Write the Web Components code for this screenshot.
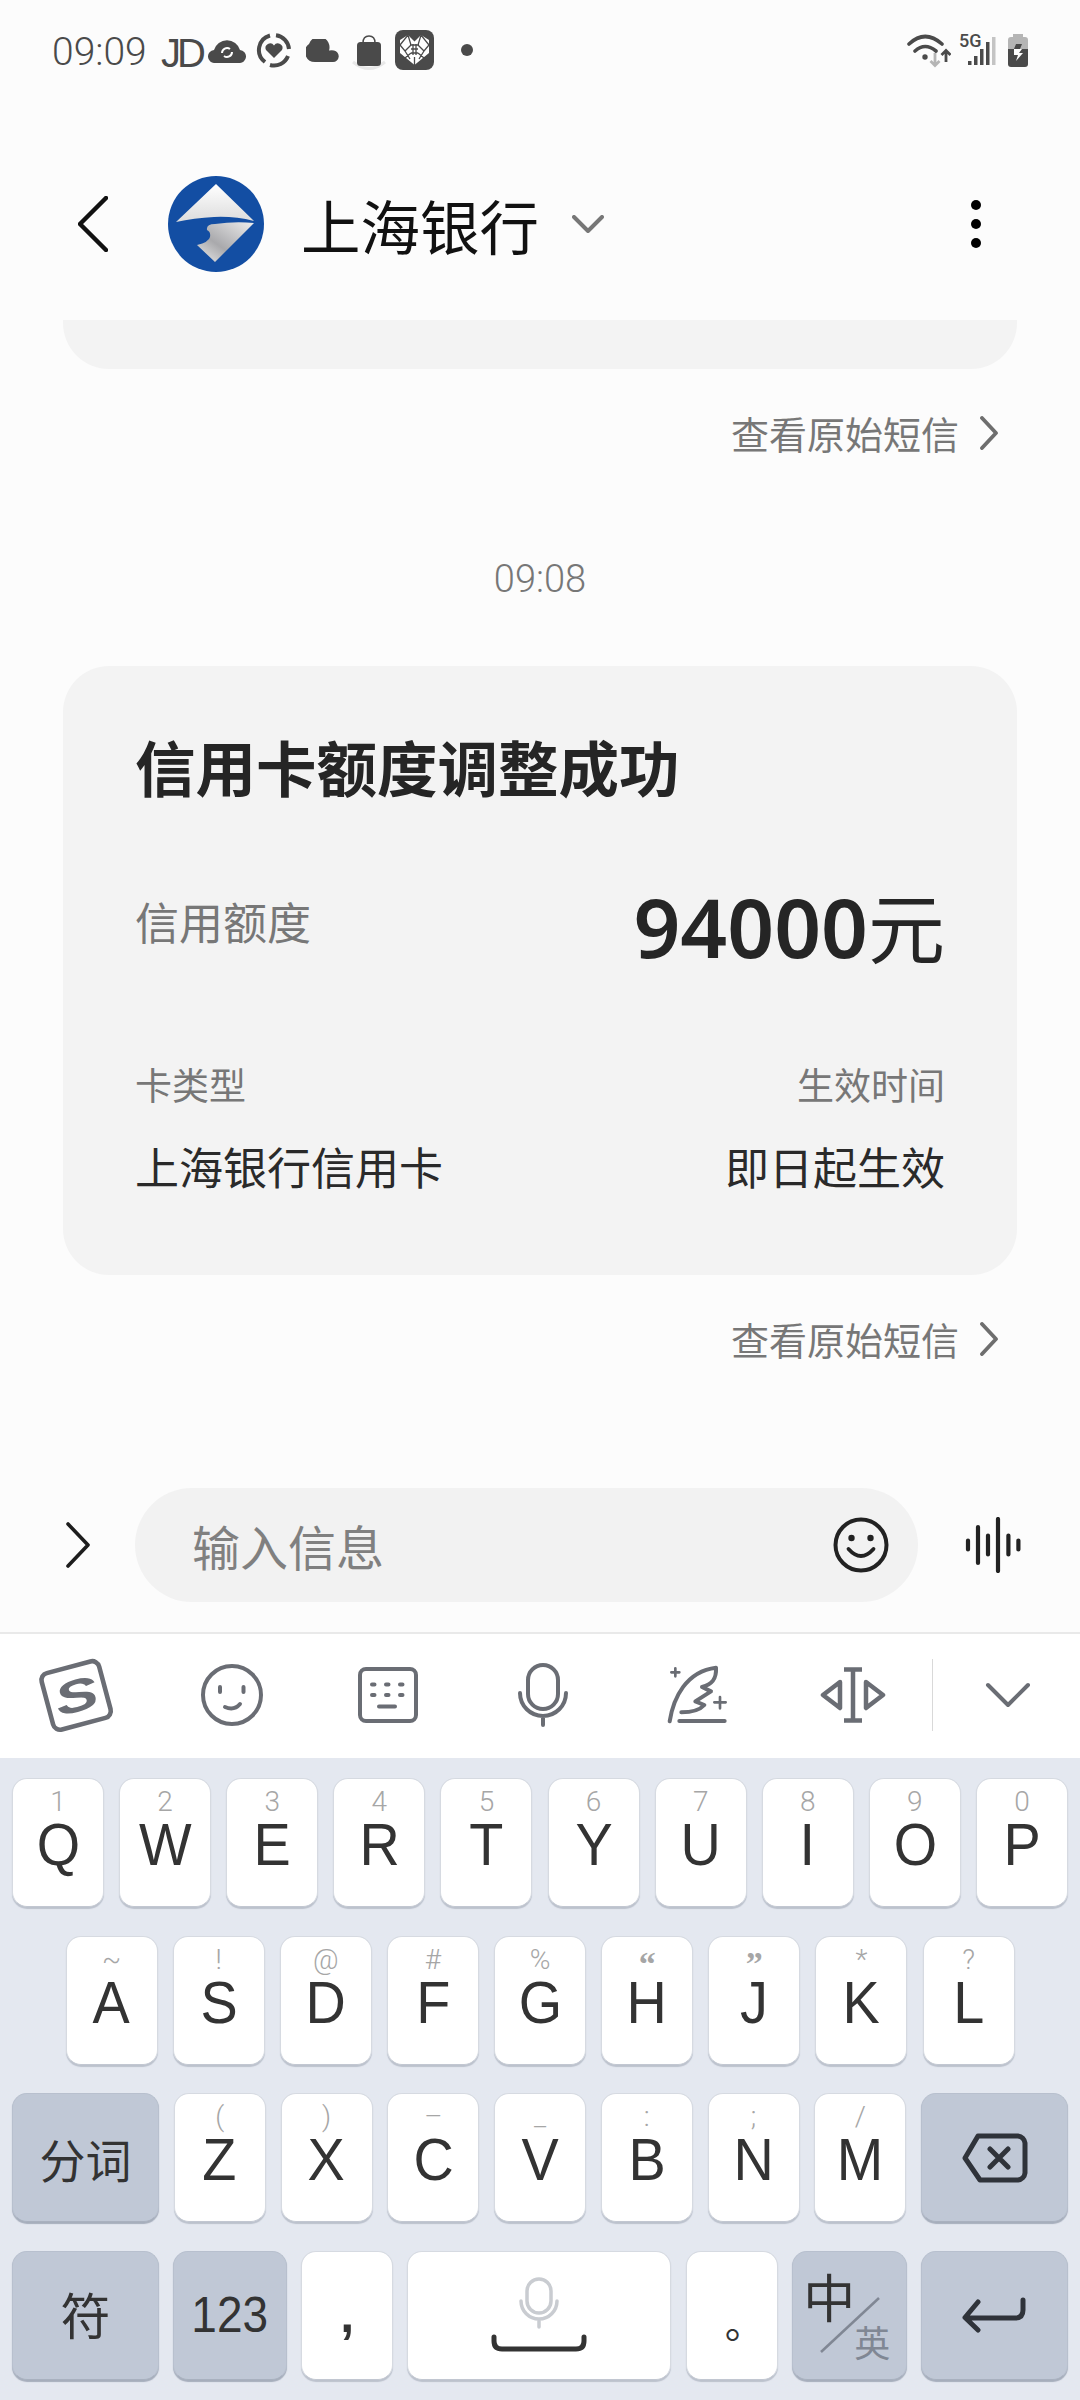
<!DOCTYPE html>
<html lang="zh">
<head>
<meta charset="utf-8">
<title>上海银行</title>
<style>
    html, body { margin: 0; padding: 0; }
    body {
        width: 1080px;
        height: 2400px;
        overflow: hidden;
        background: #fcfcfc;
        display: flex;
        flex-direction: column;
        font-family: "Noto Sans CJK SC", "Noto Sans", sans-serif;
    }
</style>
</head>
<body>
<status-bar></status-bar>
<app-header>上海银行</app-header>
<message-list>
    <bubble-stub></bubble-stub>
    <source-link>查看原始短信</source-link>
    <time-label>09:08</time-label>
    <limit-card>
        <span slot="title">信用卡额度调整成功</span>
        <span slot="label">信用额度</span>
        <span slot="digits">94000</span>
        <span slot="unit">元</span>
        <span slot="type-label">卡类型</span>
        <span slot="type-value">上海银行信用卡</span>
        <span slot="time-label">生效时间</span>
        <span slot="time-value">即日起生效</span>
    </limit-card>
    <source-link>查看原始短信</source-link>
</message-list>
<compose-bar>输入信息</compose-bar>
<ime-toolbar></ime-toolbar>
<ime-keyboard></ime-keyboard>

<script>
const INK = "#4a4a4a";

class StatusBar extends HTMLElement {
    constructor() {
        super();
        this.shadowDOM = this.attachShadow({ mode: "open" });
    }

    connectedCallback() {
        this.render();
    }

    render() {
        this.shadowDOM.innerHTML = `
        <style>
        :host { display: flex; height: 104px; box-sizing: border-box; padding: 31px 0 0 52px; color: ${INK}; }
        .time { font: 300 39px/40px Roboto, sans-serif; margin-top: 1px; width: 109px; }
        .jd { font: 400 40px/40px "Liberation Sans", sans-serif; letter-spacing: -4px; width: 47px; margin-top: 2px; }
        svg { display: block; flex: none; }
        .five { font: 500 18px/18px Roboto, sans-serif; }
        </style>
        <div class="time">09:09</div>
        <div class="jd">JD</div>
        <svg width="38" height="25" viewBox="0 0 38 25" style="margin-top:7px">
            <path fill="${INK}" d="M7 25h24a6.5 6.5 0 0 0 1-13A13.5 13.5 0 0 0 6 12a6.5 6.5 0 0 0 1 13z"/>
            <path fill="none" stroke="#fff" stroke-width="2" d="M14 15a5 5 0 0 1 8-4M24 14a5 5 0 0 1-8 4"/>
        </svg>
        <svg width="36" height="36" viewBox="0 0 36 36" style="margin:1px 0 0 10px">
            <path fill="none" stroke="${INK}" stroke-width="4" d="M14 3.5A15 15 0 0 0 9 30M14 33A15 15 0 0 0 32 24M33 17A15 15 0 0 0 20 3.2"/>
            <path fill="${INK}" d="M18 26l-8-8a4.6 4.6 0 0 1 8-4.500a4.600 4.600 0 0 1 8 4.500z"/>
        </svg>
        <svg width="33" height="23" viewBox="0 0 33 23" style="margin:8px 0 0 14px">
            <path fill="${INK}" d="M9 23h18a5.800 5.800 0 0 0 1-11.500q-2-.5-5 0A10.500 10.500 0 0 0 3 5a10 10 0 0 0 6 18z"/>
        </svg>
        <svg width="36" height="38" viewBox="0 0 36 38" style="margin:3px 0 0 12px">
            <path fill="none" stroke="#e8e8e8" stroke-width="3" d="M2 28q16 13 32 0"/>
            <path fill="none" stroke="${INK}" stroke-width="1.500" d="M12 9q0-7 6-7t6 7"/>
            <rect x="6" y="8" width="24" height="24" rx="3.500" fill="${INK}"/>
        </svg>
        <svg width="39" height="40" viewBox="0 0 39 40" style="margin:-1px 0 0 8px">
            <rect width="39" height="40" rx="8" fill="${INK}"/>
            <path fill="#fff" d="M19.500 11.500L26 5l8 5v13L19.500 35 5 23V10l8-5z"/>
            <path fill="none" stroke="${INK}" stroke-width="1.300" d="M5 15l8-10 3 10-6 6zM34 15L26 5l-3 10 6 6zM15 15h9M16 19h7M16 23h7M18 14v11M21 14v11M10 21l5 8M29 21l-5 8M10 28l6-5M29 28l-6-5M19.500 27v8"/>
        </svg>
        <svg width="12" height="12" viewBox="0 0 12 12" style="margin:13px 0 0 27px"><circle cx="6" cy="6" r="6" fill="${INK}"/></svg>
        <svg width="44" height="36" viewBox="0 0 44 36" style="margin:1px 0 0 434px">
            <path fill="none" stroke="${INK}" stroke-width="3.600" stroke-linecap="round" d="M2 12Q18-3 35 12M8 19q10-9 21 0M14 24.500"/>
            <circle cx="18" cy="25" r="2.700" fill="${INK}"/>
            <path fill="none" stroke="#b5b5b5" stroke-width="2.800" d="M28 21v12M23.500 29l4.500 4.500 4.500-4.500"/>
            <path fill="none" stroke="${INK}" stroke-width="2.800" d="M39 30V19M34.500 23l4.500-4.500 4.500 4.500"/>
        </svg>
        <div style="width:40px;height:36px;margin:0 0 0 8px;display:flex;flex-direction:column">
            <span class="five" style="height:0;margin-top:1px">5G</span>
            <svg width="40" height="35" viewBox="0 0 40 35" style="margin-top:0">
                <rect x="9" y="29" width="3.500" height="4" fill="${INK}"/>
                <rect x="15" y="24" width="3.500" height="9" fill="${INK}"/>
                <rect x="21" y="17" width="3.500" height="16" fill="${INK}"/>
                <rect x="27" y="10" width="3.500" height="23" fill="${INK}"/>
                <rect x="33" y="5" width="3.500" height="28" fill="#c4c4c4"/>
            </svg>
        </div>
        <svg width="22" height="33" viewBox="0 0 22 33" style="margin:3px 0 0 8px">
            <path fill="#b5b5b5" d="M6 0h10v3h2a3 3 0 0 1 3 3v9H1V6a3 3 0 0 1 3-3h2z"/>
            <path fill="${INK}" d="M1 15h20v15a3 3 0 0 1-3 3H4a3 3 0 0 1-3-3z"/>
            <path fill="${INK}" d="M9 10h6l-2 5H7z"/>
            <path fill="#fff" d="M7 15h8l-3 4h4l-7 8 2-6H7z"/>
        </svg>
        `;
    }
}

class AppHeader extends HTMLElement {
    constructor() {
        super();
        this.shadowDOM = this.attachShadow({ mode: "open" });
    }

    connectedCallback() {
        this.render();
    }

    render() {
        this.shadowDOM.innerHTML = `
        <style>
        :host { display: flex; align-items: center; height: 216px; box-sizing: border-box; padding: 72px 0 48px 78px; color: #111; }
        svg { display: block; flex: none; }
        .name { font-size: 59.500px; line-height: 96px; font-weight: 400; margin-left: 37px; width: 271px; white-space: nowrap; }
        </style>
        <svg width="30" height="56" viewBox="0 0 30 56"><path fill="none" stroke="#111" stroke-width="4.500" stroke-linecap="round" stroke-linejoin="round" d="M28 2L2 28l26 26"/></svg>
        <svg width="96" height="96" viewBox="168 176 96 96" style="margin-left:60px">
            <defs>
                <linearGradient id="a" x1="0" y1="0" x2="0" y2="1"><stop offset="0" stop-color="#fff"/><stop offset="1" stop-color="#dcdcdc"/></linearGradient>
                <linearGradient id="b" x1="1" y1="0" x2="0" y2="1"><stop offset="0" stop-color="#eee"/><stop offset=".6" stop-color="#a9a9ac"/><stop offset="1" stop-color="#ececec"/></linearGradient>
            </defs>
            <circle cx="216" cy="224" r="48" fill="#134ea3"/>
            <path fill="url(#a)" d="M216 184l38 37q-20-5-40-4t-38 5z"/>
            <path fill="url(#b)" d="M254 223l-39 39-18-17q12-3 13-8t-3-7q-1-6 8-6 20-3 39-1z"/>
        </svg>
        <div class="name"><slot></slot></div>
        <svg width="32" height="18" viewBox="0 0 32 18"><path fill="none" stroke="#777" stroke-width="4" stroke-linecap="round" stroke-linejoin="round" d="M2 2l14 14L30 2"/></svg>
        <svg width="10" height="48" viewBox="0 0 10 48" style="margin-left:367px"><circle cx="5" cy="5" r="5"/><circle cx="5" cy="24" r="5"/><circle cx="5" cy="43" r="5"/></svg>
        `;
    }
}

class MessageList extends HTMLElement {
    constructor() {
        super();
        this.shadowDOM = this.attachShadow({ mode: "open" });
    }

    connectedCallback() {
        this.shadowDOM.innerHTML = `
        <style>
        :host { display: flex; flex-direction: column; height: 1168px; overflow: hidden; }
        </style>
        <slot></slot>
        `;
    }
}

class BubbleStub extends HTMLElement {
    constructor() {
        super();
        this.shadowDOM = this.attachShadow({ mode: "open" });
    }

    connectedCallback() {
        this.shadowDOM.innerHTML = `
        <style>
        :host { display: block; height: 49px; margin: 0 63px; background: #f3f3f3; border-radius: 0 0 46px 46px; }
        </style>
        `;
    }
}

class SourceLink extends HTMLElement {
    constructor() {
        super();
        this.shadowDOM = this.attachShadow({ mode: "open" });
    }

    connectedCallback() {
        this.shadowDOM.innerHTML = `
        <style>
        :host { display: flex; justify-content: flex-end; align-items: center; height: 40px; margin-top: 44px; margin-bottom: 1px; padding-right: 81px; color: #777; font-size: 38px; line-height: 40px; font-weight: 400; }
        svg { display: block; margin-left: 20px; }
        </style>
        <slot></slot>
        <svg width="20" height="34" viewBox="0 0 20 34"><path fill="none" stroke="#6e6e6e" stroke-width="3.800" stroke-linecap="round" stroke-linejoin="round" d="M3 2l14 15L3 32"/></svg>
        `;
    }
}

class TimeLabel extends HTMLElement {
    constructor() {
        super();
        this.shadowDOM = this.attachShadow({ mode: "open" });
    }

    connectedCallback() {
        this.shadowDOM.innerHTML = `
        <style>
        :host { display: block; height: 44px; margin-top: 103px; text-align: center; color: #777; font: 300 38px/44px Roboto, sans-serif; }
        </style>
        <slot></slot>
        `;
    }
}

class LimitCard extends HTMLElement {
    constructor() {
        super();
        this.shadowDOM = this.attachShadow({ mode: "open" });
    }

    connectedCallback() {
        this.shadowDOM.innerHTML = `
        <style>
        :host { display: block; box-sizing: border-box; height: 609px; margin: 65px 63px 0; padding: 60px 72px 0; background: #f3f3f3; border-radius: 46px; }
        .title { font-size: 60.500px; line-height: 80px; font-weight: 700; color: #252525; white-space: nowrap; }
        .row { display: flex; justify-content: space-between; }
        .amount { height: 100px; margin-top: 69px; }
        .label { color: #777; font-size: 44px; line-height: 60px; margin-top: 16px; font-weight: 400; }
        .figure { color: #252525; line-height: 100px; white-space: nowrap; }
        .digits { font: 600 82px/100px "Noto Sans", sans-serif; }
        .unit { font-size: 77px; font-weight: 400; }
        .small { color: #777; font-size: 37px; line-height: 50px; font-weight: 400; }
        .value { color: #2a2a2a; font-size: 44px; line-height: 60px; font-weight: 400; }
        .meta { margin-top: 84px; }
        .values { margin-top: 27px; }
        </style>
        <div class="title"><slot name="title"></slot></div>
        <div class="row amount">
            <div class="label"><slot name="label"></slot></div>
            <div class="figure"><span class="digits"><slot name="digits"></slot></span><span class="unit"><slot name="unit"></slot></span></div>
        </div>
        <div class="row meta small">
            <div><slot name="type-label"></slot></div>
            <div><slot name="time-label"></slot></div>
        </div>
        <div class="row values value">
            <div><slot name="type-value"></slot></div>
            <div><slot name="time-value"></slot></div>
        </div>
        `;
    }
}

class ComposeBar extends HTMLElement {
    constructor() {
        super();
        this.shadowDOM = this.attachShadow({ mode: "open" });
    }

    connectedCallback() {
        this.shadowDOM.innerHTML = `
        <style>
        :host { display: flex; align-items: flex-start; height: 144px; box-sizing: border-box; padding-left: 66px; }
        svg { display: block; flex: none; }
        .pill { display: flex; align-items: center; justify-content: space-between; box-sizing: border-box; width: 783px; height: 114px; margin-left: 45px; padding: 0 29px 0 57px; background: #f2f2f2; border-radius: 57px; color: #808080; font-size: 48px; font-weight: 400; }
        </style>
        <svg width="24" height="46" viewBox="0 0 24 46" style="margin-top:34px"><path fill="none" stroke="#1d1d1d" stroke-width="3.600" stroke-linecap="round" stroke-linejoin="round" d="M2 2l20 21L2 44"/></svg>
        <div class="pill">
            <span><slot></slot></span>
            <svg width="56" height="56" viewBox="0 0 56 56">
                <circle cx="28" cy="28" r="25.500" fill="none" stroke="#222" stroke-width="4"/>
                <circle cx="18.500" cy="21" r="3.200" fill="#222"/><circle cx="37.500" cy="21" r="3.200" fill="#222"/>
                <path fill="none" stroke="#222" stroke-width="3.800" stroke-linecap="round" d="M15.500 32q12.500 14 25 0"/>
            </svg>
        </div>
        <svg width="56" height="56" viewBox="0 0 56 56" style="margin:29px 0 0 47px">
            <path fill="none" stroke="#222" stroke-width="4.200" stroke-linecap="round" d="M3 23.500v9M13 10v36M23 18.500v19M33 2v52M43.400 18.500v19M53.400 23.500v9"/>
        </svg>
        `;
    }
}

class ImeToolbar extends HTMLElement {
    constructor() {
        super();
        this.shadowDOM = this.attachShadow({ mode: "open" });
    }

    connectedCallback() {
        this.shadowDOM.innerHTML = `
        <style>
        :host { display: grid; grid-template-columns: repeat(6, 155px) 0 1fr; justify-items: center; align-items: center; box-sizing: border-box; height: 126px; padding-bottom: 2px; background: #fff; border-top: 2px solid #e9e9e9; }
        svg { display: block; }
        .bar { width: 1px; height: 72px; background: #d9d9d9; margin-left: 2px; justify-self: start; }
        .last { margin-left: 0; transform: translateX(3px); }
        .smile { transform: translateX(-1px); }
        </style>
        <svg width="82" height="82" viewBox="0 0 80 80" style="transform:translateX(-2px)">
            <g transform="rotate(-15 40 40)">
                <rect x="11" y="12" width="58" height="57" rx="7" fill="#fff" stroke="#6a6d74" stroke-width="4.500"/>
                <text x="40" y="56" text-anchor="middle" font-family="Liberation Sans" font-weight="700" font-style="italic" font-size="44" fill="#6a6d74" transform="translate(40 0) scale(1.450 1) translate(-40 0)">S</text>
            </g>
        </svg>
        <svg class="smile" width="64" height="64" viewBox="0 0 64 64">
            <circle cx="32" cy="32" r="29" fill="none" stroke="#6a6d74" stroke-width="4"/>
            <path fill="none" stroke="#6a6d74" stroke-width="4" stroke-linecap="round" d="M20 24v5M43.500 24v5M25 44q9 4 15-3"/>
        </svg>
        <svg width="60" height="56" viewBox="0 0 60 56">
            <rect x="2" y="2" width="56" height="52" rx="6" fill="none" stroke="#6a6d74" stroke-width="4"/>
            <path fill="none" stroke="#6a6d74" stroke-width="4" stroke-linecap="round" d="M14 17.500h2.500M28 17.500h2.500M42 17.500h2.500M14 28h2.500M28 28h2.500M42 28h2.500M21 39.500h16"/>
        </svg>
        <svg width="50" height="64" viewBox="0 0 50 64">
            <rect x="10" y="2" width="30" height="44" rx="15" fill="none" stroke="#6a6d74" stroke-width="4"/>
            <path fill="none" stroke="#6a6d74" stroke-width="4" stroke-linecap="round" d="M2 30a23 23 0 0 0 46 0M25 53v9"/>
        </svg>
        <svg width="64" height="64" viewBox="530 40 192 192">
            <path fill="none" stroke="#6a6d74" stroke-width="12" stroke-linecap="round" stroke-linejoin="round" d="M541 215C552 145 590 65 680 54C682 88 668 105 638 112L665 125L618 155L645 166Q625 188 576 188M570 214H706"/>
            <path fill="none" stroke="#6a6d74" stroke-width="8" stroke-linecap="round" d="M558 56v24M546 68h24M692 142v34M675 158h34"/>
        </svg>
        <svg width="66" height="56" viewBox="0 0 66 56">
            <path fill="none" stroke="#6a6d74" stroke-width="4.500" stroke-linejoin="round" d="M33 2v52M24 2.500h18M24 53.500h18M20 15L3 28l17 13zM46 15l17 13-17 13z"/>
        </svg>
        <div class="bar"></div>
        <svg class="last" width="46" height="26" viewBox="0 0 46 26"><path fill="none" stroke="#6a6d74" stroke-width="4" stroke-linecap="round" stroke-linejoin="round" d="M3 3l20 20L43 3"/></svg>
        `;
    }
}

class ImeKey extends HTMLElement {
    constructor() {
        super();
        this.shadowDOM = this.attachShadow({ mode: "open" });
    }

    connectedCallback() {
        const sub = this.getAttribute("sub") || "";
        const quote = sub === "“" || sub === "”";
        this.shadowDOM.innerHTML = `
        <style>
        :host { display: flex; flex-direction: column; align-items: center; flex: none; box-sizing: border-box; width: 92px; height: 129px; padding-top: 8px; background: #fff; border: 1px solid #d6dae1; border-bottom-color: #c2c7d1; border-radius: 15px; box-shadow: 0 1.500px 1px #bcc2cd; color: #333; overflow: hidden; }
        :host([wide]) { padding-top: 0; justify-content: center; }
        :host([dark]) { background: #c0c8d6; border-color: #b8c0ce; border-bottom-color: #a9b1bf; box-shadow: 0 1.500px 1px #a6aebc; }
        .sub { height: 30px; font: 300 28px/30px Roboto, sans-serif; color: #a6a6a6; }
        .quote { font: 700 34px/38px "Liberation Serif", serif; }
        .main { font: 400 60px/56px "Liberation Sans", sans-serif; transform: scaleX(.93); }
        </style>
        ${sub ? `<div class="sub${quote ? " quote" : ""}">${sub}</div><div class="main"><slot></slot></div>` : `<slot></slot>`}
        `;
    }
}

class ImeKeyboard extends HTMLElement {
    constructor() {
        super();
        this.shadowDOM = this.attachShadow({ mode: "open" });
    }

    connectedCallback() {
        this.render();
    }

    letterKeys(letters, subs) {
        return letters.split("").map((l, i) => `<ime-key sub="${subs[i]}">${l}</ime-key>`).join("");
    }

    render() {
        this.shadowDOM.innerHTML = `
        <style>
        :host { display: flex; flex-direction: column; gap: 28.670px; flex: 1; box-sizing: border-box; padding: 20px 12px 0; background: #e4e8f0; }
        .row { display: flex; justify-content: space-between; height: 129px; }
        .two { padding: 0 53.500px; }
        .cjk { font-size: 46px; color: #333; }
        .num { font: 400 50px/56px "Liberation Sans", sans-serif; color: #333; transform: scaleX(.92); }
        svg { display: block; }
        .lang { display: grid; grid-template-columns: 50px 40px; width: 96px; height: 100%; position: relative; }
        .zh { font-size: 52px; line-height: 60px; margin: 14px 0 0 2px; }
        .en { font-size: 36px; line-height: 40px; margin-top: 69px; margin-left: 3px; color: #808794; }
        .slash { position: absolute; left: 19px; top: 45px; }
        .comma { font: 700 50px/50px "Liberation Sans", sans-serif; margin-top: 38px; color: #333; }
        .stop { font-size: 40px; line-height: 40px; margin: 49px 0 0 -2px; color: #333; padding-left: 28px; }
        </style>
        <div class="row">${this.letterKeys("QWERTYUIOP", ["1","2","3","4","5","6","7","8","9","0"])}</div>
        <div class="row two">${this.letterKeys("ASDFGHJKL", ["~","!","@","#","%","“","”","*","?"])}</div>
        <div class="row">
            <ime-key wide dark style="width:147px"><span class="cjk">分词</span></ime-key>
            ${this.letterKeys("ZXCVBNM", ["(",")","–","_",":",";","/"])}
            <ime-key wide dark style="width:147px">
                <svg width="66" height="50" viewBox="0 0 66 50"><path fill="none" stroke="#2f333a" stroke-width="5" stroke-linejoin="round" stroke-linecap="round" d="M16 3H56a8 8 0 0 1 7 7V40a8 8 0 0 1-7 7H18L3 25zM28 16l18 18M46 16L28 34"/></svg>
            </ime-key>
        </div>
        <div class="row">
            <ime-key wide dark style="width:147px"><span class="cjk" style="font-size:50px;margin-top:-4px">符</span></ime-key>
            <ime-key wide dark style="width:114px"><span class="num">123</span></ime-key>
            <ime-key style="width:92px;padding-top:0"><span class="comma">,</span></ime-key>
            <ime-key wide style="width:264px">
                <svg width="96" height="76" viewBox="0 0 96 76" style="margin-top:-1px">
                    <rect x="36" y="2" width="24" height="34" rx="12" fill="none" stroke="#c9ccd1" stroke-width="3.500"/>
                    <path fill="none" stroke="#c9ccd1" stroke-width="3.500" stroke-linecap="round" d="M30 24a18 18 0 0 0 36 0M48 43v7"/>
                    <path fill="none" stroke="#333" stroke-width="5" stroke-linecap="round" d="M3 60v4q0 8 8 8h74q8 0 8-8v-4"/>
                </svg>
            </ime-key>
            <ime-key style="width:92px;padding-top:0"><span class="stop">。</span></ime-key>
            <ime-key dark style="width:115px;padding-top:0">
                <div class="lang">
                    <span class="zh">中</span><span class="en">英</span>
                    <svg class="slash" width="60" height="56" viewBox="0 0 60 56"><path stroke="#808794" stroke-width="2.500" d="M1 55L59 1"/></svg>
                </div>
            </ime-key>
            <ime-key wide dark style="width:147px">
                <svg width="64" height="36" viewBox="0 0 64 36"><path fill="none" stroke="#2f333a" stroke-width="5" stroke-linecap="round" stroke-linejoin="round" d="M61 3v10q0 8-8 8H4M16 5L3 20.500 16 33"/></svg>
            </ime-key>
        </div>
        `;
    }
}

customElements.define("status-bar", StatusBar);
customElements.define("app-header", AppHeader);
customElements.define("message-list", MessageList);
customElements.define("bubble-stub", BubbleStub);
customElements.define("source-link", SourceLink);
customElements.define("time-label", TimeLabel);
customElements.define("limit-card", LimitCard);
customElements.define("compose-bar", ComposeBar);
customElements.define("ime-toolbar", ImeToolbar);
customElements.define("ime-key", ImeKey);
customElements.define("ime-keyboard", ImeKeyboard);
</script>
</body>
</html>
